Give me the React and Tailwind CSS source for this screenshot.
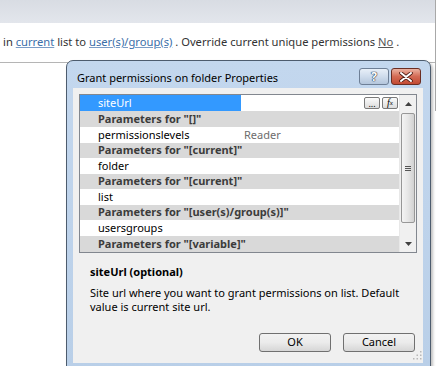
import React from "react";

const rows = [
  { type: "item", name: "siteUrl", selected: true, h: "h-[16px]" },
  { type: "cat", name: 'Parameters for "[]"', h: "h-[16px]" },
  { type: "item", name: "permissionslevels", value: "Reader", h: "h-[16px]" },
  { type: "cat", name: 'Parameters for "[current]"', h: "h-[15px]" },
  { type: "item", name: "folder", h: "h-[16px]" },
  { type: "cat", name: 'Parameters for "[current]"', h: "h-[15px]" },
  { type: "item", name: "list", h: "h-[16px]" },
  { type: "cat", name: 'Parameters for "[user(s)/group(s)]"', h: "h-[15px]" },
  { type: "item", name: "usersgroups", h: "h-[16px]" },
  { type: "cat", name: 'Parameters for "[variable]"', h: "h-[16px]" },
];

const GridRow = ({ row }) => {
  if (row.type === "cat") {
    return (
      <div className={`${row.h} flex items-center bg-[#d9d9d9] pl-[18px] font-bold text-[#3c3c3c]`}>
        {row.name}
      </div>
    );
  }
  return (
    <div className={`${row.h} flex bg-white`}>
      <div className={`w-[161px] flex items-center pl-[18px] ${row.selected ? "bg-[#3399ff] text-white" : "text-black"}`}>
        {row.name}
      </div>
      <div className="flex-1 flex items-center pl-[3px] text-[#6d6d6d]">
        {row.value}
        {row.selected && (
          <div className="ml-auto mr-[1px] flex gap-[2px]">
            <div className="w-[16px] h-[12px] rounded-[2px] border border-[#7a7a7a] bg-linear-to-b from-[#fbfbfb] to-[#dcdcdc] flex items-end justify-center text-[9px] leading-[9px] text-black">
              ...
            </div>
            <div className="w-[16px] h-[12px] rounded-[2px] border border-[#7a7a7a] bg-linear-to-b from-[#fbfbfb] to-[#dcdcdc] flex items-center justify-center font-['Liberation_Serif',serif] italic text-[10px] leading-[10px] text-black">
              f<span className="text-[7px]">x</span>
            </div>
          </div>
        )}
      </div>
    </div>
  );
};

const Scrollbar = () => (
  <div className="w-[17px] bg-[#f0f0f0] border-l border-[#e8e8e8] flex flex-col items-center">
    <div className="h-[17px] flex items-center justify-center">
      <svg width="7" height="4" viewBox="0 0 7 4"><path d="M0 4 L3.5 0 L7 4 Z" fill="#404040" /></svg>
    </div>
    <div className="mt-[1px] w-[14px] h-[110px] rounded-[2px] border border-[#979797] bg-linear-to-r from-[#f4f4f4] via-[#e6e6e6] to-[#d2d2d2] flex flex-col items-center justify-center gap-[1px]">
      <div className="w-[6px] h-[1px] bg-[#555]" />
      <div className="w-[6px] h-[1px] bg-[#555]" />
      <div className="w-[6px] h-[1px] bg-[#555]" />
    </div>
    <div className="flex-1 flex items-end justify-center pb-[6px]">
      <svg width="7" height="4" viewBox="0 0 7 4"><path d="M0 0 L3.5 4 L7 0 Z" fill="#404040" /></svg>
    </div>
  </div>
);

const App = () => {
  return (
    <div className="relative w-[439px] h-[366px] overflow-hidden bg-white font-['Noto_Sans','DejaVu_Sans',sans-serif] text-[11px]">
      <div className="w-[436px] h-[111px] border-r border-[#a8a8a8]">
        <div className="h-[23px] bg-linear-to-b from-[#d8dce3] to-[#e3e6ec]" />
        <div className="h-[40px] flex items-center pl-[3px] border-b border-[#b5b5b5] text-[11.2px] text-[#333]">
          <span>in&nbsp;</span>
          <span className="text-[#3a6ea8] underline decoration-[#7a9cc6]">current</span>
          <span>&nbsp;list to&nbsp;</span>
          <span className="text-[#3a6ea8] underline decoration-[#7a9cc6]">user(s)/group(s)</span>
          <span>&nbsp;. Override current unique permissions&nbsp;</span>
          <span className="text-[#555] underline">No</span>
          <span>&nbsp;.</span>
        </div>
      </div>

      <div className="absolute left-[66px] top-[60px] w-[365px] h-[309px] rounded-t-[7px] border border-[#4d5c6e] bg-linear-to-b from-[#c3d7ee] to-[#b9cfe8] shadow-[2px_2px_3px_rgba(0,0,0,0.25)] flex flex-col">
        <div className="h-[27px] flex items-start">
          <div className="pl-[10px] pt-[9px] text-[11px] leading-[16px] text-black">Grant permissions on folder Properties</div>
          <div className="ml-auto mr-[9px] mt-[7px] flex gap-[2px]">
            <div className="w-[30px] h-[17px] rounded-[3px] border border-[#6e7f96] bg-linear-to-b from-[#e8eff8] via-[#cfdcec] to-[#b4c6dc] flex items-center justify-center text-white font-bold text-[12px] leading-[12px] [text-shadow:0_0_1px_#1c2c44,0_0_1px_#1c2c44,0_0_1px_#1c2c44]">
              ?
            </div>
            <div className="w-[30px] h-[17px] rounded-[3px] border border-[#6b2d22] bg-linear-to-b from-[#eab2a2] via-[#d36a54] to-[#c24a33] flex items-center justify-center">
              <svg width="14" height="10" viewBox="0 0 14 10">
                <path d="M2 1 L12 9 M12 1 L2 9" stroke="#4a1a12" strokeWidth="3.6" strokeLinecap="round" />
                <path d="M2 1 L12 9 M12 1 L2 9" stroke="#ffffff" strokeWidth="2" strokeLinecap="round" />
              </svg>
            </div>
          </div>
        </div>

        <div className="ml-[6px] mr-[7px] h-[275px] bg-[#f0f0f0] flex flex-col relative">
          <div className="mx-[6px] mt-[6px] h-[159px] border border-[#82878f] bg-white flex">
            <div className="flex-1 flex flex-col">
              {rows.map((row, i) => (
                <GridRow key={i} row={row} />
              ))}
            </div>
            <Scrollbar />
          </div>

          <div className="pl-[17px] mt-[12px] text-[11px] leading-[14px] text-black">
            <div className="font-bold">siteUrl (optional)</div>
            <div className="mt-[7px] whitespace-nowrap">
              Site url where you want to grant permissions on list. Default
              <br />
              value is current site url.
            </div>
          </div>

          <div className="mt-auto mb-[11px] mr-[8px] flex justify-end gap-[12px]">
            <button className="w-[72px] h-[19px] rounded-[3px] border border-[#707070] bg-linear-to-b from-[#f2f2f2] via-[#ebebeb] to-[#d6d6d6] text-[11px] text-black">OK</button>
            <button className="w-[72px] h-[19px] rounded-[3px] border border-[#707070] bg-linear-to-b from-[#f2f2f2] via-[#ebebeb] to-[#d6d6d6] text-[11px] text-black">Cancel</button>
          </div>

          <svg className="absolute right-[1px] bottom-[2px]" width="10" height="10" viewBox="0 0 10 10">
            <rect x="8" y="0" width="1.5" height="1.5" fill="#b8b8b8" />
            <rect x="4.5" y="3.5" width="1.5" height="1.5" fill="#b8b8b8" />
            <rect x="8" y="3.5" width="1.5" height="1.5" fill="#b8b8b8" />
            <rect x="1" y="7" width="1.5" height="1.5" fill="#b8b8b8" />
            <rect x="4.5" y="7" width="1.5" height="1.5" fill="#b8b8b8" />
            <rect x="8" y="7" width="1.5" height="1.5" fill="#b8b8b8" />
          </svg>
        </div>
      </div>
    </div>
  );
};

export default App;
